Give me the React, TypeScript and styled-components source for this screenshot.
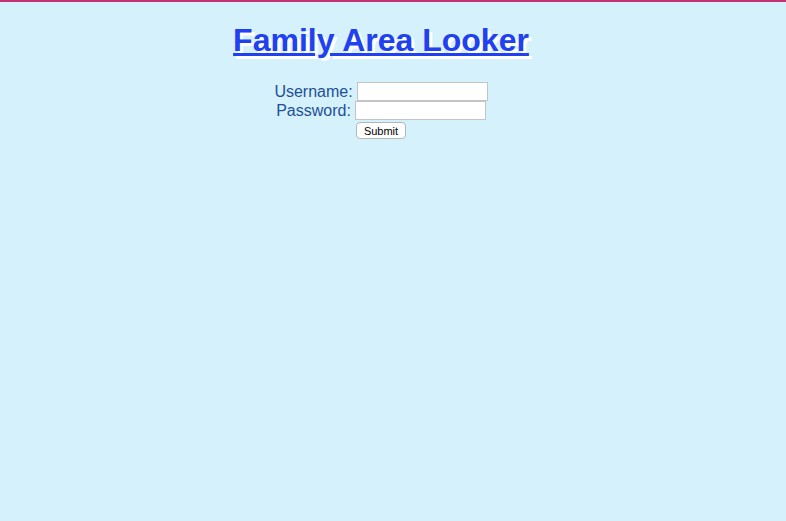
import React from "react";
import styled, { createGlobalStyle } from "styled-components";

const Global = createGlobalStyle`
  html, body { margin: 0; padding: 0; }
  body {
    background: #d4f1fc;
    font-family: "Liberation Sans", Arial, sans-serif;
    min-height: 521px;
    border-top: 2px solid #c8316f;
    box-sizing: border-box;
  }
`;

const Page = styled.div`
  display: flex;
  flex-direction: column;
  align-items: center;
  padding-right: 24px;
`;

const Title = styled.h1`
  margin: 20px 0 0;
  font-size: 32px;
  font-weight: bold;
  line-height: 37px;
  a {
    color: #2140ef;
    text-decoration: underline;
    text-shadow: 3px 3px 0 #ffffff;
  }
`;

const Form = styled.form`
  margin-top: 23px;
  display: flex;
  flex-direction: column;
  align-items: center;
`;

const Row = styled.div`
  display: flex;
  align-items: center;
  gap: 4px;
  height: 19px;
`;

const Label = styled.label`
  font-size: 16px;
  color: #1e4f97;
`;

const Input = styled.input`
  width: 131px;
  height: 19px;
  box-sizing: border-box;
  border: 1px solid #c4c4c4;
  background: #fff;
  margin: 0;
  padding: 0 2px;
`;

const Button = styled.button`
  margin-top: 2px;
  font-family: "Liberation Sans", Arial, sans-serif;
  font-size: 11px;
  height: 17px;
  padding: 0 7px;
  border: 1px solid #b6b6b6;
  border-radius: 4px;
  background: #fff;
  color: #000;
`;

export default function App() {
  return (
    <>
      <Global />
      <Page>
        <Title>
          <a href="#">Family Area Looker</a>
        </Title>
        <Form onSubmit={(e) => e.preventDefault()}>
          <Row>
            <Label>Username:</Label>
            <Input type="text" />
          </Row>
          <Row>
            <Label>Password:</Label>
            <Input type="password" />
          </Row>
          <Button type="submit">Submit</Button>
        </Form>
      </Page>
    </>
  );
}
